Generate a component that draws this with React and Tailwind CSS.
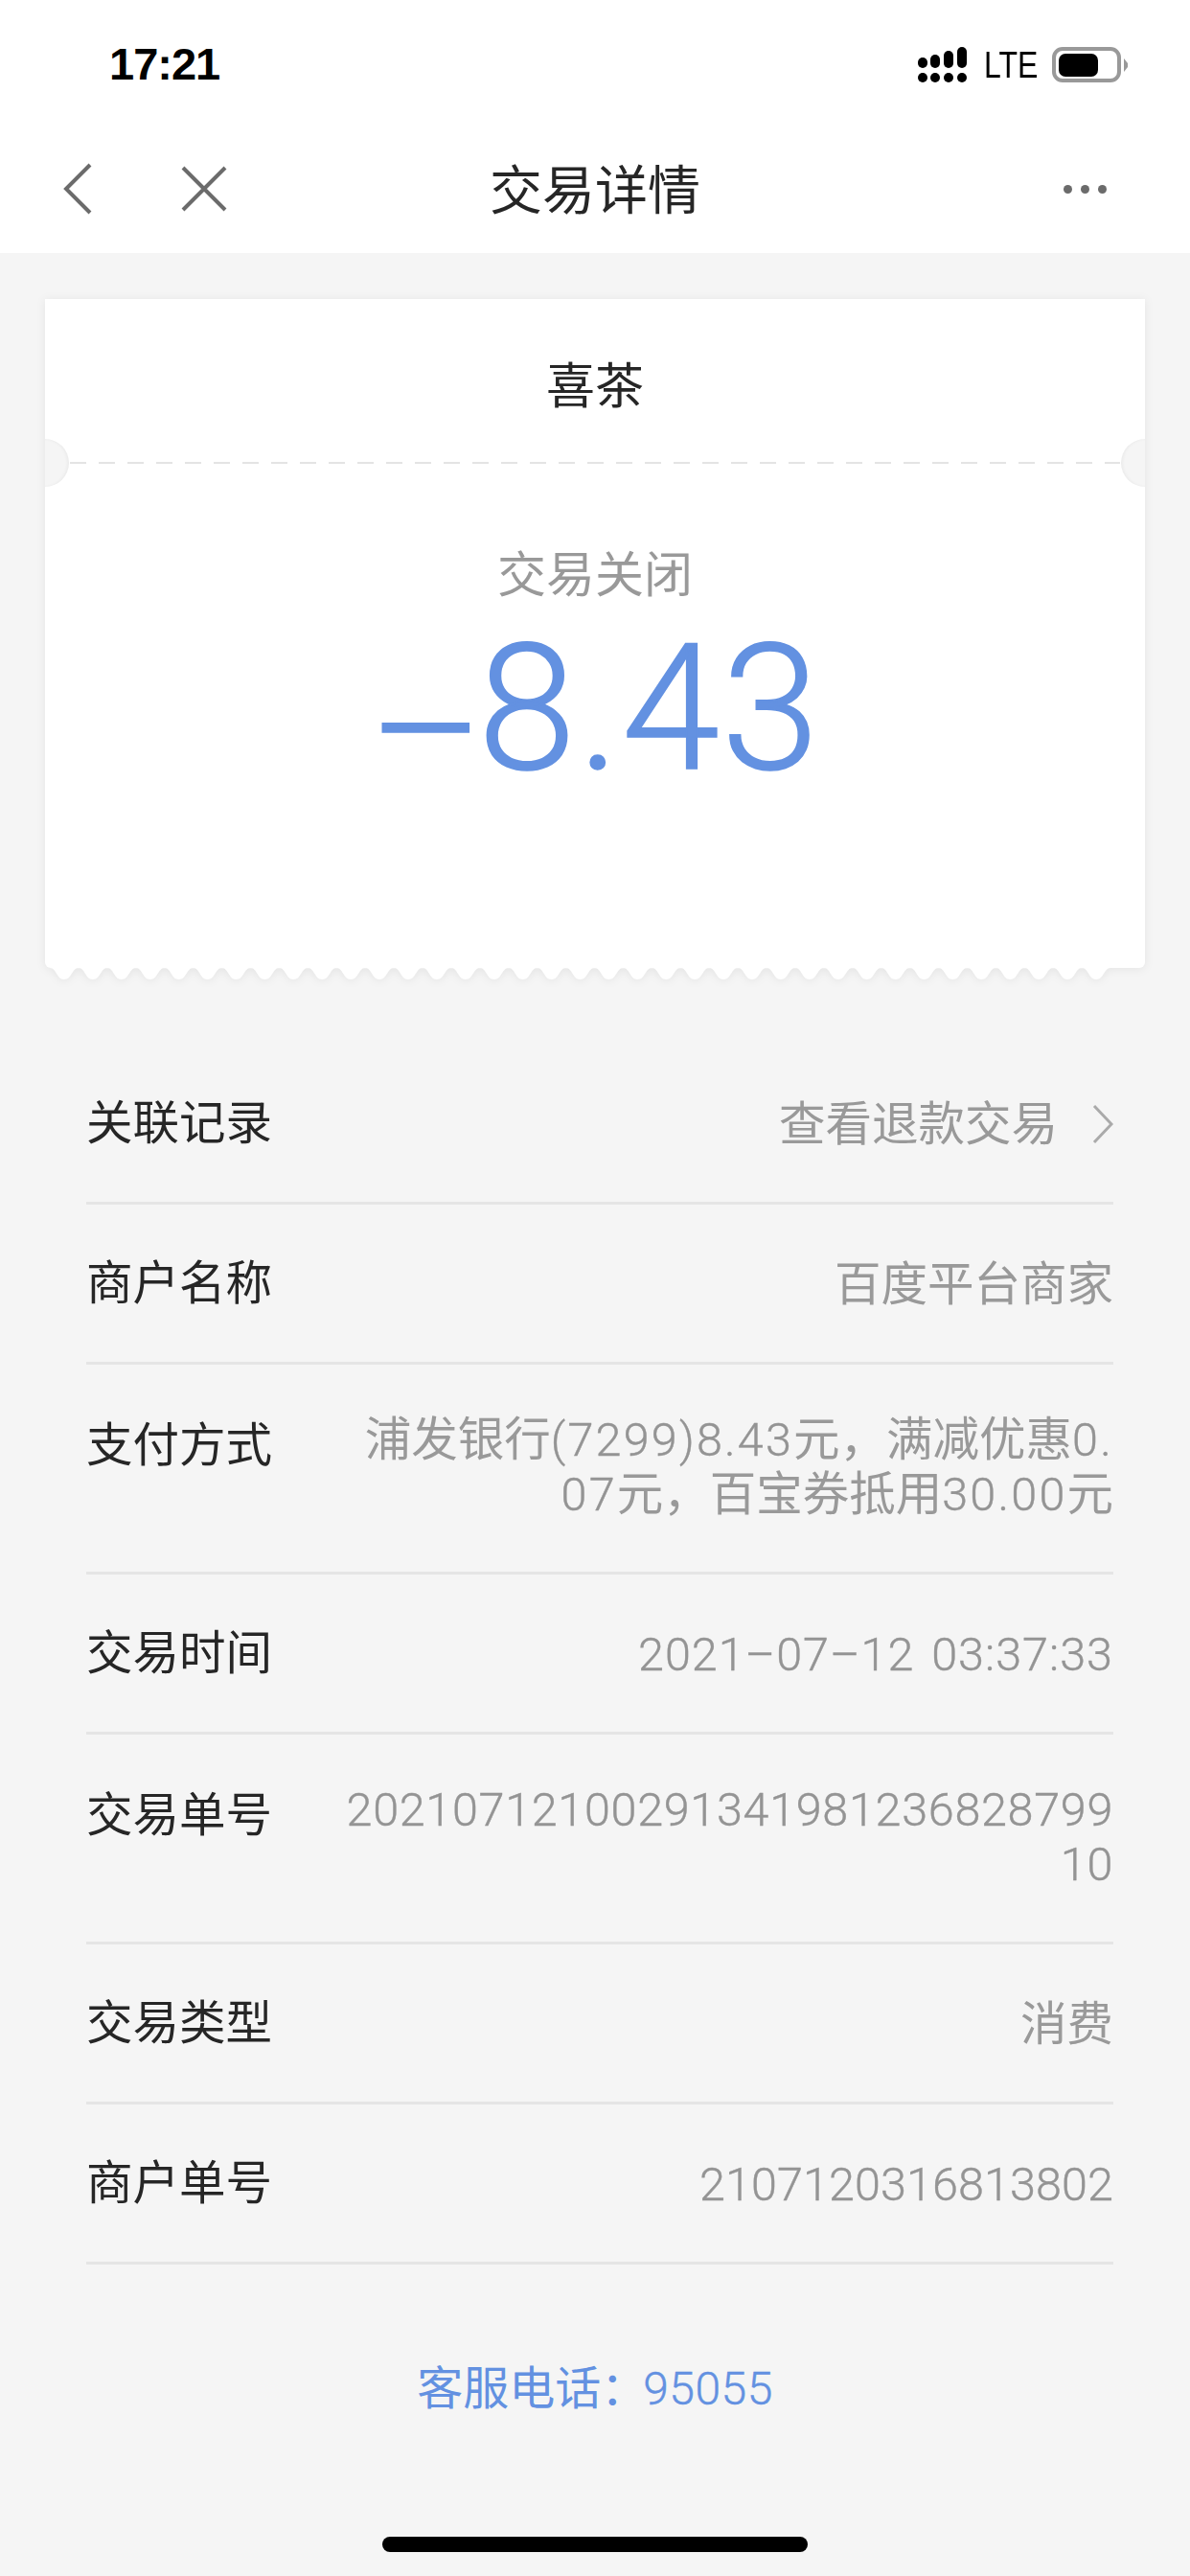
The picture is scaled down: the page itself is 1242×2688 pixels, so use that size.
const rows = [
  { label: '关联记录', value: '查看退款交易', arrow: true },
  { label: '商户名称', value: '百度平台商家' },
  { label: '支付方式', value: '浦发银行(7299)8.43元，满减优惠0.\n07元，百宝券抵用30.00元', two: true, track: 'tracking-[2.2px]' },
  { label: '交易时间', value: '2021–07–12 03:37:33', track: 'tracking-[1px]' },
  { label: '交易单号', value: '20210712100291341981236828799\n10', two: true },
  { label: '交易类型', value: '消费' },
  { label: '商户单号', value: '2107120316813802', track: 'tracking-[0.1px]' },
];

const wavePath = () => {
  let d = 'M0 0H5';
  for (let i = 0; i < 37; i++) {
    const c = 20 + i * 29.92;
    d += `L${c - 15} 0C${c - 8} 0 ${c - 8} 12 ${c} 12C${c + 8} 12 ${c + 8} 0 ${c + 15} 0`;
  }
  return d + 'L1148 0Z';
};

const StatusBar = () => (
  <div className="flex h-[96px] items-start justify-between pl-[114px] pr-[64px]">
    <span className="mt-[39px] font-['Liberation_Sans',sans-serif] text-[47px] leading-[56px] font-bold tracking-[-1px] text-black">17:21</span>
    <div className="mt-[49px] flex h-[38px] items-center">
      <svg width="52" height="38" viewBox="0 0 52 38">
        <rect x="0" y="27" width="10" height="10" rx="5" />
        <rect x="13" y="27" width="10" height="10" rx="5" />
        <rect x="27" y="27" width="10" height="10" rx="5" />
        <rect x="41" y="27" width="10" height="10" rx="5" />
        <rect x="0" y="11" width="10" height="11" rx="5" />
        <rect x="13" y="8" width="10" height="14" rx="5" />
        <rect x="27" y="4" width="10" height="18" rx="5" />
        <rect x="41" y="0" width="10" height="22" rx="5" />
      </svg>
      <span className="ml-[17px] w-[54px] origin-left scale-x-[0.82] font-['Liberation_Sans',sans-serif] text-[39px] leading-[38px] whitespace-nowrap text-black">LTE</span>
      <svg className="ml-[17px]" width="80" height="38" viewBox="0 0 80 38">
        <rect x="2" y="2" width="68" height="33" rx="9" fill="none" stroke="#999" strokeWidth="4" />
        <rect x="7" y="7" width="41" height="24" rx="7" fill="#000" />
        <path d="M75 12L79 17V21L75 26Z" fill="#999" />
      </svg>
    </div>
  </div>
);

const NavBar = () => (
  <div className="relative flex h-[168px] items-center justify-between pl-[66px] pr-[87px] pt-[34px]">
    <div className="flex items-center gap-[93px]">
      <svg width="30" height="54" viewBox="0 0 30 54" fill="none" stroke="#6b6b6b" strokeWidth="4">
        <path d="M28 2L3 27L28 52" />
      </svg>
      <svg width="48" height="48" viewBox="0 0 48 48" fill="none" stroke="#6b6b6b" strokeWidth="4">
        <path d="M2 2L46 46M46 2L2 46" />
      </svg>
    </div>
    <span className="absolute left-0 right-0 pt-[3px] text-center text-[55px] leading-[64px] text-[#262626]">交易详情</span>
    <div className="flex gap-[9px]">
      <span className="h-[9px] w-[9px] rounded-full bg-[#6b6b6b]" />
      <span className="h-[9px] w-[9px] rounded-full bg-[#6b6b6b]" />
      <span className="h-[9px] w-[9px] rounded-full bg-[#6b6b6b]" />
    </div>
  </div>
);

const Ticket = () => (
  <div className="mx-[47px] mt-[48px] drop-shadow-[0_1px_5px_rgba(0,0,0,0.07)]">
    <div className="relative h-[698px] rounded-b-[6px] bg-white">
      <div className="flex h-[170px] items-center justify-center pt-[14px] text-[51px] leading-[60px] text-[#262626]">喜茶</div>
      <div className="mx-[26px] h-[2px] bg-[repeating-linear-gradient(90deg,#e4e4e4_0_17px,transparent_17px_30px)]" />
      <div className="absolute left-0 top-[146px] h-[50px] w-[25px] rounded-r-full bg-[#f5f5f5] shadow-[inset_-2px_0_3px_rgba(0,0,0,0.04)]" />
      <div className="absolute right-0 top-[146px] h-[50px] w-[25px] rounded-l-full bg-[#f5f5f5] shadow-[inset_2px_0_3px_rgba(0,0,0,0.04)]" />
      <div className="pt-[88px] text-center text-[51px] leading-[58px] text-[#999999]">交易关闭</div>
      <div className="mt-[14px] text-center font-['Roboto',sans-serif] text-[184px] leading-[190px] font-light tracking-[2px] text-[#6391e1] [-webkit-text-stroke:1.5px_#6391e1]">
        <span className="mr-[-8px] align-[-24px]">–</span>8.43
      </div>
    </div>
    <svg className="block" width="1148" height="13" viewBox="0 0 1148 13">
      <path d={wavePath()} fill="#fff" />
    </svg>
  </div>
);

// latin runs get a bit of tracking, cjk stays on its own grid
const Value = ({ text, track = 'tracking-[0.7px]' }) =>
  text.split(/([\x00-\xff–]+)/).map((part, i) =>
    i % 2 ? (
      <span key={i} className={`font-light text-[#949494] [-webkit-text-stroke:0.4px_#949494] ${track}`}>
        {part}
      </span>
    ) : (
      part
    ),
  );

const Row = ({ label, value, arrow, two, track }) => (
  <div className={`flex border-b-[3px] border-[#e5e5e5] ${two ? 'h-[219px] pt-[56px]' : 'h-[167px] items-center pt-[2px]'}`}>
    <div className="w-[260px] shrink-0 text-[48.5px] leading-[58px] text-[#262626]">{label}</div>
    <div className={`flex flex-1 items-center justify-end text-right text-[#999999] ${two ? '-mt-[6px] self-start' : ''}`}>
      <span className="text-[48.5px] leading-[57px] whitespace-pre-line [word-spacing:5px]">
        <Value text={value} track={track} />
      </span>
      {arrow && (
        <svg className="ml-[36px] shrink-0" width="22" height="42" viewBox="0 0 22 42" fill="none" stroke="#aaaaaa" strokeWidth="3">
          <path d="M2 2L20 21L2 40" />
        </svg>
      )}
    </div>
  </div>
);

export default function App() {
  return (
    <div className="flex h-[2688px] w-[1242px] flex-col overflow-hidden bg-[#f5f5f5] font-['Roboto','Noto_Sans_CJK_SC',sans-serif]">
      <div className="bg-white">
        <StatusBar />
        <NavBar />
      </div>
      <Ticket />
      <div className="ml-[90px] mr-[80px] mt-[67px]">
        {rows.map((r) => (
          <Row key={r.label} {...r} />
        ))}
      </div>
      <div className="mt-[101px] text-center text-[48px] leading-[58px] text-[#6391e1]">
        客服电话<span className="tracking-[-12px]">：</span>
        <span className="ml-[8px] font-light tracking-[0.5px] [-webkit-text-stroke:0.4px_#6391e1]">95055</span>
      </div>
      <div className="mx-auto mt-[125px] h-[16px] w-[444px] rounded-full bg-black" />
    </div>
  );
}
